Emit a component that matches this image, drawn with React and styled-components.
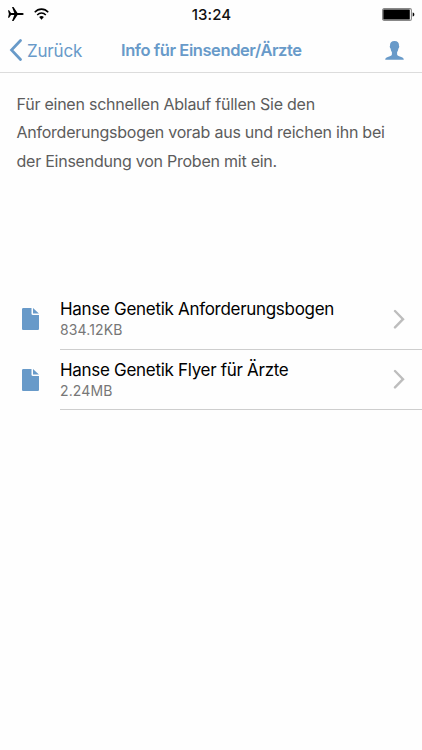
import React from 'react'
import styled, { createGlobalStyle } from 'styled-components'

const files = [
  { id: 1, name: 'Hanse Genetik Anforderungsbogen', size: '834.12KB' },
  { id: 2, name: 'Hanse Genetik Flyer für Ärzte', size: '2.24MB' },
]

const StatusBar = () => (
  <StatusWrapper>
    <div className='signal'>
      <svg width='16' height='14' viewBox='0 0 16 14'>
        <path
          d='M0 3.2h1.1L3 6h3.3L4 0h1.500l4 6h4.300c1 0 1.900.4 1.900 1s-.9 1-1.900 1H9.500l-4 6H4l2.300-6H3L1.100 10.800H0L.900 7z'
          fill='#000'
        />
      </svg>
      <svg width='15' height='12' viewBox='0 0 16 12' preserveAspectRatio='none'>
        <g fill='none' stroke='#000' strokeWidth='1.600'>
          <path d='M.8 4.300C4.800.1 11.200.1 15.200 4.300' />
          <path d='M3.400 7C6 4.400 10 4.400 12.600 7' />
        </g>
        <path d='M5.500 9.100c1.400-1.400 3.600-1.400 5 0L8 11.700z' fill='#000' />
      </svg>
    </div>
    <time>13:24</time>
    <svg className='battery' width='33' height='13' viewBox='0 0 33 13'>
      <rect x='.6' y='.6' width='28.800' height='11.800' rx='1.500' fill='#fff' stroke='#888' strokeWidth='1.100' />
      <rect x='1.300' y='1.500' width='26.500' height='10' rx='.5' fill='#000' />
      <path d='M30.700 4.500c2.200.5 2.200 3.500 0 4z' fill='#000' />
    </svg>
  </StatusWrapper>
)

const Navbar = () => (
  <NavWrapper>
    <button type='button' className='back-btn'>
      <svg width='13' height='22' viewBox='0 0 13 22'>
        <path d='M11.500 1.500L2.500 11l9 9.500' fill='none' stroke='#689ac9' strokeWidth='2.700' strokeLinecap='round' />
      </svg>
      <span>Zurück</span>
    </button>
    <h1>Info für Einsender/Ärzte</h1>
    <button type='button' className='user-btn' aria-label='Profil'>
      <svg width='19' height='19' viewBox='0 0 19 19'>
        <path
          d='M9.500 0C6.400 0 4.800 1.900 5 4.700c-.5.200-.2 2.300.6 2.700.3 1.900.7 2.800 1.300 3.500v2.700c-.4 1.500-2.300 1.700-4.100 2.300C1.100 16.500.3 17 .2 18.800h18.600c-.1-1.800-.9-2.300-2.600-2.900-1.800-.6-3.700-.8-4.100-2.300v-2.700c.6-.7 1-1.600 1.300-3.500.8-.4 1.100-2.500.6-2.700C14.200 1.900 12.600 0 9.500 0z'
          fill='#689ac9'
        />
      </svg>
    </button>
  </NavWrapper>
)

const FileItem = ({ name, size }) => (
  <ItemWrapper>
    <svg className='file-icon' width='17' height='22' viewBox='0 0 17 22'>
      <path d='M1.300 0h8.200v5.800c0 .7.500 1.200 1.200 1.200H17v13.700c0 .7-.6 1.300-1.300 1.300H1.300C.6 22 0 21.400 0 20.700V1.300C0 .6.6 0 1.300 0z' fill='#689ac9' />
      <path d='M11 .1L16.900 5.600H11z' fill='#689ac9' />
    </svg>
    <div className='content'>
      <div>
        <h2>{name}</h2>
        <p>{size}</p>
      </div>
      <svg className='chevron' width='12' height='20' viewBox='0 0 12 20'>
        <path d='M2 2l8 8.200-8 8.200' fill='none' stroke='#bdbdbd' strokeWidth='2.400' strokeLinecap='round' />
      </svg>
    </div>
  </ItemWrapper>
)

const App = () => (
  <>
    <GlobalStyle />
    <Page>
      <StatusBar />
      <Navbar />
      <Intro>
        Für einen schnellen Ablauf füllen Sie den
        <br />
        Anforderungsbogen vorab aus und reichen ihn bei
        <br />
        der Einsendung von Proben mit ein.
      </Intro>
      <FileList>
        {files.map((file) => (
          <FileItem key={file.id} {...file} />
        ))}
      </FileList>
    </Page>
  </>
)

const GlobalStyle = createGlobalStyle`
  * {
    box-sizing: border-box;
    margin: 0;
    padding: 0;
  }
  body {
    background: #fefefe;
    font-family: Inter, 'Liberation Sans', sans-serif;
  }
  svg {
    display: block;
    flex-shrink: 0;
  }
`

const Page = styled.main`
  width: 422px;
  height: 750px;
  overflow: hidden;
  background: #fefefe;
`

const StatusWrapper = styled.div`
  display: grid;
  grid-template-columns: 1fr auto 1fr;
  align-items: center;
  height: 28px;
  padding: 0 7px 0 8px;

  .signal {
    display: flex;
    align-items: center;
    gap: 10px;
  }
  time {
    font-size: 15px;
    font-weight: 500;
    letter-spacing: 0.1px;
    color: #111;
  }
  .battery {
    justify-self: end;
  }
`

const NavWrapper = styled.header`
  display: grid;
  grid-template-columns: 112px 1fr auto;
  align-items: center;
  height: 45px;
  padding: 0 18px 0 9px;
  border-bottom: 1px solid #dcdcdc;
  color: #689ac9;

  h1 {
    font-size: 16.5px;
    font-weight: 600;
    letter-spacing: -0.42px;
  }
  button {
    border: none;
    background: none;
    color: inherit;
    font-family: inherit;
  }
  .back-btn {
    display: flex;
    align-items: center;
    gap: 5px;
    font-size: 17px;
    letter-spacing: -0.2px;
  }
  .back-btn span {
    padding-top: 1px;
  }
`

const Intro = styled.p`
  height: 216px;
  padding: 16.5px 16px 0 16.5px;
  font-size: 16px;
  line-height: 28.5px;
  letter-spacing: -0.24px;
  color: #5c5c5c;
`

const FileList = styled.ul`
  list-style: none;
`

const ItemWrapper = styled.li`
  display: flex;
  align-items: center;
  height: 61px;
  padding-left: 22px;

  &:last-child {
    height: 60px;
  }
  .file-icon {
    margin-bottom: 1px;
  }
  .content {
    flex: 1;
    display: flex;
    align-items: center;
    justify-content: space-between;
    height: 100%;
    margin-left: 21px;
    padding-right: 17px;
    border-bottom: 1px solid #cecece;
  }
  .chevron {
    margin-bottom: 1px;
  }
  h2 {
    font-size: 17px;
    font-weight: 400;
    line-height: 22px;
    letter-spacing: -0.3px;
    color: #000;
  }
  p {
    font-size: 14px;
    line-height: 20px;
    letter-spacing: 0.12px;
    color: #777;
  }
`

export default App
